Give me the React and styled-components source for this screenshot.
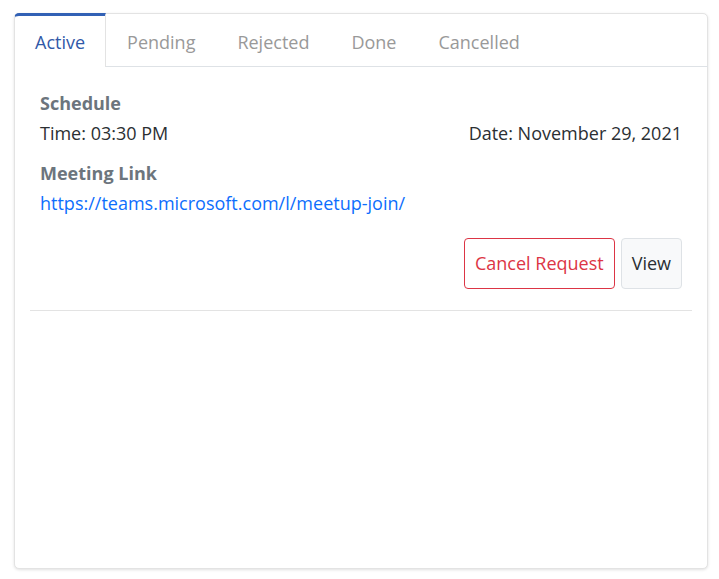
import styled, { createGlobalStyle } from "styled-components";

const GlobalStyle = createGlobalStyle`
  body {
    margin: 0;
    background: #fff;
    font-family: "Source Sans Pro", "Open Sans", "Liberation Sans", sans-serif;
  }
`

const Page = styled.div`
  padding: 13px 11px 10px 14px;
`

const Card = styled.div`
  height: 556px;
  box-sizing: border-box;
  border: 1px solid #e3e3e3;
  border-radius: 5px;
  background: #fff;
  box-shadow: 0 1px 3px rgba(0, 0, 0, 0.12);
  display: flex;
  flex-direction: column;
`

const TabBar = styled.div`
  display: flex;
  border-bottom: 1px solid #dee2e6;
  margin: -1px -1px 0;
`

const Tab = styled.div`
  padding: 13px 20px 11px;
  font-size: 18px;
  line-height: 27px;
  color: ${p => (p.$active ? "#3159a8" : "#999")};
  background: ${p => (p.$active ? "#fff" : "transparent")};
  border: 1px solid ${p => (p.$active ? "#e3e3e3" : "transparent")};
  border-top: 3px solid ${p => (p.$active ? "#3261b5" : "transparent")};
  border-bottom: none;
  border-radius: 5px 0 0 0;
  margin-bottom: -1px;
  cursor: pointer;
`

const Body = styled.div`
  padding: 13px 15px;
`

const Item = styled.div`
  padding: 10px 10px 21px;
  border-bottom: 1px solid #e3e3e3;
`

const Label = styled.div`
  font-size: 18px;
  line-height: 27px;
  font-weight: 700;
  color: #6c757d;
  margin-bottom: 3px;
`

const Row = styled.div`
  display: flex;
  justify-content: space-between;
  font-size: 18px;
  line-height: 27px;
  color: #2b2f33;
  margin-bottom: ${p => p.$gap || 0}px;
`

const Link = styled.a`
  display: block;
  font-size: 18px;
  line-height: 27px;
  color: #0d6efd;
  text-decoration: none;
`

const Actions = styled.div`
  display: flex;
  justify-content: flex-end;
  gap: 6px;
  margin-top: 21px;
`

const Button = styled.button`
  font-family: inherit;
  font-size: 18px;
  line-height: 27px;
  padding: 11px 10px;
  border-radius: 4px;
  cursor: pointer;
  border: 1px solid ${p => (p.$danger ? "#dc3545" : "#dee2e6")};
  color: ${p => (p.$danger ? "#dc3545" : "#2b2f33")};
  background: ${p => (p.$danger ? "#fff" : "#f8f9fa")};
`

const tabs = ["Active", "Pending", "Rejected", "Done", "Cancelled"]

export default function App() {
  return (
    <>
      <GlobalStyle />
      <Page>
        <Card>
          <TabBar>
            {tabs.map(t => (
              <Tab key={t} $active={t === "Active"}>{t}</Tab>
            ))}
          </TabBar>
          <Body>
            <Item>
              <Label>Schedule</Label>
              <Row $gap={13}>
                <span>Time: 03:30 PM</span>
                <span>Date: November 29, 2021</span>
              </Row>
              <Label>Meeting Link</Label>
              <Link href="#">https://teams.microsoft.com/l/meetup-join/</Link>
              <Actions>
                <Button $danger>Cancel Request</Button>
                <Button>View</Button>
              </Actions>
            </Item>
          </Body>
        </Card>
      </Page>
    </>
  )
}
